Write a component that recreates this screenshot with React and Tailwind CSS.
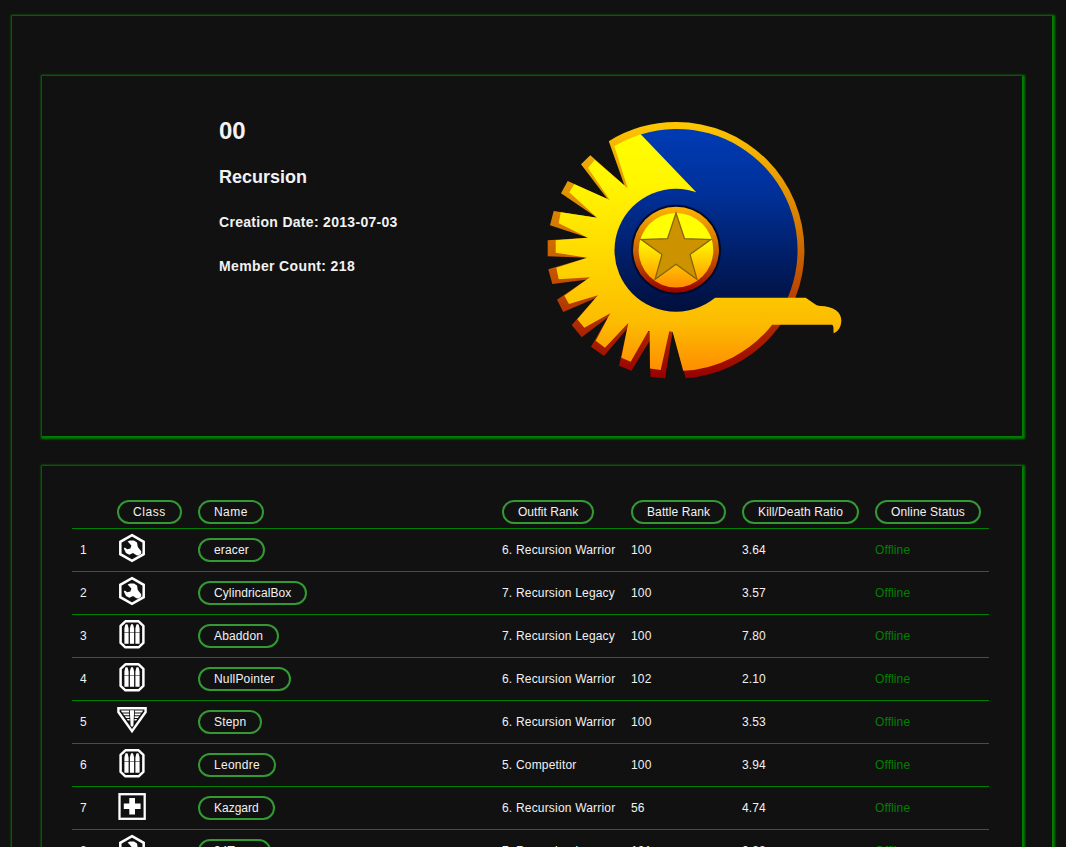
const members = [
  { icon: "engineer", name: "eracer", rank: "6. Recursion Warrior", br: "100", kd: "3.64", fit: "w-[67px] tracking-[0.16px]" },
  { icon: "engineer", name: "CylindricalBox", rank: "7. Recursion Legacy", br: "100", kd: "3.57", fit: "w-[109px] tracking-[0.1px]" },
  { icon: "heavy", name: "Abaddon", rank: "7. Recursion Legacy", br: "100", kd: "7.80", fit: "w-[81px] tracking-[0.14px]" },
  { icon: "heavy", name: "NullPointer", rank: "6. Recursion Warrior", br: "102", kd: "2.10", fit: "w-[93px] tracking-[0.18px]" },
  { icon: "max", name: "Stepn", rank: "6. Recursion Warrior", br: "100", kd: "3.53", fit: "w-[64px] tracking-[0.2px]" },
  { icon: "heavy", name: "Leondre", rank: "5. Competitor", br: "100", kd: "3.94", fit: "w-[78px] tracking-[0.28px]" },
  { icon: "medic", name: "Kazgard", rank: "6. Recursion Warrior", br: "56", kd: "4.74", fit: "w-[77px] tracking-[0px]" },
  { icon: "engineer", name: "34Tuna", rank: "7. Recursion Legacy", br: "101", kd: "2.88", fit: "w-[73px] tracking-[0.1px]" },
];

const rowGrid =
  "grid grid-cols-[45px_81px_304px_129px_111px_133px_114px] w-[917px] items-center border-b border-[#008000]";
const panel = "shadow-[1px_1px_2px_2px_#008000] bg-[#111111]";

function Bullet({ x }) {
  return (
    <path
      d={`M${x} 13.4V9.4Q${x + 0.2} 7.6 ${x + 1.2} 5.2h1.8Q${x + 4} 7.6 ${x + 4.2} 9.4V13.4zM${x} 14h4.2V24.8h-4.2z`}
      fill="#fff"
    />
  );
}

function ClassIcon({ type }) {
  return (
    <svg viewBox="0 0 30 30" className="block h-[30px] w-[30px]" fill="none" stroke="none">
      {type === "engineer" && (
        <>
          <path d="M15 2.2L26.7 8.8V21.2L15 27.8L3.3 21.2V8.8Z" stroke="#fff" strokeWidth="2.5" />
          <path
            d="M10.6 8.6L13 7.4L17 7.6L20 9.6L20.8 14L24.2 18.2L24.2 20.6L21.6 22.4L19.4 22.2L16 20L12.4 21.8L9 20L6.8 15.6L7.8 14.4L10.2 16.2L13.4 15.6L14.4 12.4Z"
            fill="#fff"
          />
        </>
      )}
      {type === "heavy" && (
        <>
          <path
            d="M8.4 2.3H21.6L26.4 6.8V23.8L21.6 28.3H8.4L3.6 23.8V6.8Z"
            stroke="#fff"
            strokeWidth="2.5"
            strokeLinejoin="round"
          />
          <Bullet x={7.4} />
          <Bullet x={12.9} />
          <Bullet x={18.4} />
        </>
      )}
      {type === "max" && (
        <>
          <path d="M1.4 3.3H28.6V7L15 26.2L1.4 7Z" stroke="#fff" strokeWidth="2.4" />
          <path
            d="M12.8 5.3H17.2L16.4 20.6L15 22L13.6 20.6ZM3.8 5.6H12V7.4H5.2ZM5.8 8.4H12.2V10.2H7.2ZM7.8 11.2H12.4V13H9.2ZM9.8 14H12.6V15.4H10.8ZM26.2 5.6H18V7.4H24.8ZM24.2 8.4H17.8V10.2H22.8ZM22.2 11.2H17.6V13H20.8ZM20.2 14H17.4V15.4H19.2Z"
            fill="#fff"
          />
        </>
      )}
      {type === "medic" && (
        <>
          <rect x="2.5" y="3.2" width="25.2" height="24.6" stroke="#fff" strokeWidth="2.3" />
          <path d="M12.3 7H18V12.4H23.6V18H18V23.4H12.3V18H6.8V12.4H12.3Z" fill="#fff" />
        </>
      )}
    </svg>
  );
}

function Pill({ fit, children }) {
  return (
    <span
      className={`inline-flex h-6 items-center rounded-full border-2 border-[#339933] pl-[14px] leading-none whitespace-nowrap ${fit}`}
    >
      {children}
    </span>
  );
}

function Emblem() {
  return (
    <svg viewBox="540 115 310 270" className="block h-[270px] w-[310px] shrink-0">
      <defs>
        <linearGradient id="rim" gradientUnits="userSpaceOnUse" x1="0" y1="122" x2="0" y2="378">
          <stop offset="0" stopColor="#ffc800" />
          <stop offset="0.5" stopColor="#cc6600" />
          <stop offset="1" stopColor="#990000" />
        </linearGradient>
        <linearGradient id="gold" gradientUnits="userSpaceOnUse" x1="0" y1="129" x2="0" y2="372">
          <stop offset="0" stopColor="#ffff00" />
          <stop offset="0.22" stopColor="#fff600" />
          <stop offset="0.5" stopColor="#ffdb00" />
          <stop offset="0.7" stopColor="#fdc500" />
          <stop offset="0.8" stopColor="#fcbb00" />
          <stop offset="1" stopColor="#ff8c00" />
        </linearGradient>
        <linearGradient id="navy" gradientUnits="userSpaceOnUse" x1="0" y1="129" x2="0" y2="312">
          <stop offset="0" stopColor="#003cb4" />
          <stop offset="0.35" stopColor="#003099" />
          <stop offset="1" stopColor="#000f3c" />
        </linearGradient>
        <linearGradient id="ring" gradientUnits="userSpaceOnUse" x1="0" y1="207" x2="0" y2="293">
          <stop offset="0" stopColor="#ffb400" />
          <stop offset="0.5" stopColor="#cc6600" />
          <stop offset="1" stopColor="#990000" />
        </linearGradient>
        <linearGradient id="disc" gradientUnits="userSpaceOnUse" x1="0" y1="212" x2="0" y2="288">
          <stop offset="0.35" stopColor="#ffff00" />
          <stop offset="1" stopColor="#ff8c00" />
        </linearGradient>
      </defs>
      <path
        fill="url(#rim)"
        d="M608.8 141.2A128.2 128.2 0 0 1 676 122.1A128.2 128.2 0 0 1 804.4 250.3A128.2 128.2 0 0 1 685.7 378.3L672.7 331.3H669.3L665 378.3L650.7 376.7L649.7 331H648.3L649.5 341L631.3 370.7L619 365.7L628.3 323L627.7 328L604 356L591 346.7L610.3 313.3L610 315.7L581.7 337.3L571.7 325L598 295.3L597 297.5L563.3 312L557 299.7L590 277.3L588 279.5L552.3 284L548.3 269.3L587.3 257.7L547.7 256.3V240.3L588 237.7L550 225.3L553.7 211L597 217.7L561 193.3L567.7 181L609.7 200L608 199.8L581 164.3L590.3 155.3L627.7 188.3L625 187Z"
      />
      <path fill="url(#rim)" d="M672.7 331.3L665 378.3L650.7 376.7L649.7 331ZM649.6 331V340L631.3 370.7L625 350Z" />
      <path fill="url(#navy)" d="M640.7 134.4A121 121 0 0 1 787.4 298.5H676V250Z" />
      <path
        fill="url(#gold)"
        d="M614.3 146Q627 139 640.7 134.3L696 192L714.3 297.7H805.7L814 303.5Q816.5 305.8 820 305.9C834 306.2 841.3 312 841.3 320.5C841.3 327 838 332 833.6 333.2C833.4 329 834 325.5 832 324.7H772.2A121 121 0 0 1 683.2 370.8L672.7 332L669.3 331.3L660.7 370L650 368.4L649.6 331H648.3L630.7 361.7L621.3 357.7L628.3 323L605 347.7L595.7 340.7L610.3 313.3L584.3 327.7L577.3 319.3L598 295.3L569 304L564.3 295.7L590 277.3L558.7 279.3L556.3 267.7L587.3 257.7L555.7 252.7V240.3L588 237.7L558.7 223.3L560.7 212.3L597 217.7L569.3 192.3L574.3 184.3L609.7 200L588 168L594.7 160L627.7 188.3Z"
      />
      <circle cx="676" cy="250.3" r="61.5" fill="url(#navy)" />
      <circle cx="676" cy="249.7" r="45" fill="#000a2a" />
      <circle cx="676" cy="249.7" r="43" fill="url(#ring)" />
      <circle cx="676" cy="250.2" r="37.3" fill="url(#disc)" />
      <path
        fill="#cc9200"
        stroke="#86660a"
        strokeWidth="1.3"
        d="M676 213L684.5 238.7L710.8 239.6L690 254.5L697 279.3L676 264.3L655 279.3L662 254.5L641.2 239.6L667.5 238.7Z"
      />
    </svg>
  );
}

export default function App() {
  return (
    <div className="h-[847px] overflow-hidden bg-[#111111] pt-4 pl-3 font-['Liberation_Sans',Arial,sans-serif] text-[12px] text-[#f2f2f2]">
      <main className={`h-[900px] w-[1040px] px-[30px] pt-[60px] ${panel}`}>
        <section className={`flex h-[360px] w-[980px] items-start ${panel}`}>
          <div className="w-[498px] pt-[41px] pl-[177px] font-bold">
            <h1 className="text-[24px] leading-[28px]">00</h1>
            <h2 className="mt-[21px] text-[18px] leading-[22px]">Recursion</h2>
            <h3 className="mt-[26px] text-[14px] leading-[16px] tracking-[0.3px]">Creation Date: 2013-07-03</h3>
            <h3 className="mt-[28px] text-[14px] leading-[16px] tracking-[0.36px]">Member Count: 218</h3>
          </div>
          <div className="pt-[39px]">
            <Emblem />
          </div>
        </section>
        <section className={`mt-[30px] h-[500px] w-[980px] px-[30px] pt-[30px] ${panel}`}>
          <div className={`h-[33px] ${rowGrid}`}>
            <span />
            <span><Pill fit="w-[65px] tracking-[0.55px]">Class</Pill></span>
            <span><Pill fit="w-[66px] tracking-[0.45px]">Name</Pill></span>
            <span><Pill fit="w-[92px] tracking-[0.03px]">Outfit Rank</Pill></span>
            <span><Pill fit="w-[95px] tracking-[0.1px]">Battle Rank</Pill></span>
            <span><Pill fit="w-[117px] tracking-[0.14px]">Kill/Death Ratio</Pill></span>
            <span><Pill fit="w-[106px] tracking-[0.15px]">Online Status</Pill></span>
          </div>
          {members.map((m, i) => (
            <div key={m.name} className={`h-[43px] ${rowGrid}`}>
              <span className="pl-2">{i + 1}</span>
              <span className="pb-1"><ClassIcon type={m.icon} /></span>
              <span><Pill fit={m.fit}>{m.name}</Pill></span>
              <span className="tracking-[0.19px]">{m.rank}</span>
              <span className="tracking-[0.2px]">{m.br}</span>
              <span className="tracking-[0.1px]">{m.kd}</span>
              <span className="tracking-[0.1px] text-[#008000]">Offline</span>
            </div>
          ))}
        </section>
      </main>
    </div>
  );
}
